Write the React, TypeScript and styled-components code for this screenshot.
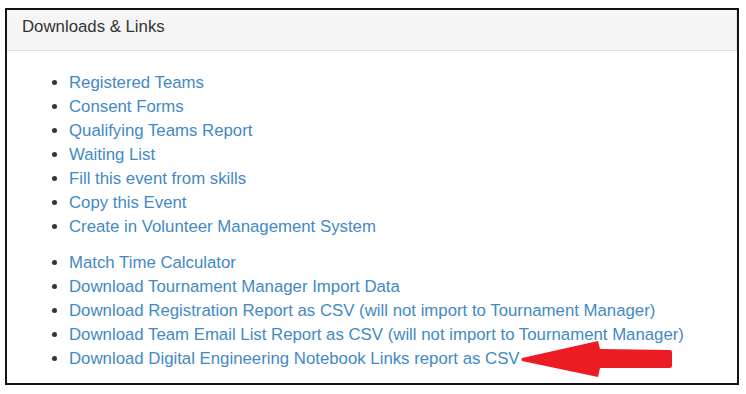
import React from "react";
import styled, { createGlobalStyle } from "styled-components";

const Global = createGlobalStyle`
  html, body { margin: 0; padding: 0; background: #ffffff; }
  body { font-family: "Liberation Sans", Arial, sans-serif; }
`;

const Frame = styled.div`
  position: relative;
  margin: 8px 0 0 5px;
  width: 734px;
  height: 377px;
  box-sizing: border-box;
  border: 2px solid #141414;
  background: #ffffff;
`;

const Heading = styled.div`
  box-sizing: border-box;
  height: 41px;
  padding: 5px 15px 0 15px;
  background: #f5f5f5;
  border-bottom: 1px solid #dddddd;
  border-right: 1px solid #e2e2e2;
  font-size: 16.8px;
  line-height: 24px;
  color: #333333;
`;

const Body = styled.div`
  padding: 20px 15px 0 15px;
`;

const LinkList = styled.ul`
  margin: 0 0 12px 0;
  padding-left: 47px;
  list-style: disc;
  color: #333333;
  font-size: 16.8px;
  line-height: 24px;
`;

const Item = styled.li``;

const Link = styled.a`
  color: #4289c6;
  text-decoration: none;
`;

const Arrow = styled.svg`
  position: absolute;
  left: 508px;
  top: 325px;
  width: 165px;
  height: 50px;
  overflow: visible;
`;

const groupA = [
  "Registered Teams",
  "Consent Forms",
  "Qualifying Teams Report",
  "Waiting List",
  "Fill this event from skills",
  "Copy this Event",
  "Create in Volunteer Management System",
];

const groupB = [
  "Match Time Calculator",
  "Download Tournament Manager Import Data",
  "Download Registration Report as CSV (will not import to Tournament Manager)",
  "Download Team Email List Report as CSV (will not import to Tournament Manager)",
  "Download Digital Engineering Notebook Links report as CSV",
];

export default function App() {
  return (
    <>
      <Global />
      <Frame>
        <Heading>Downloads &amp; Links</Heading>
        <Body>
          <LinkList>
            {groupA.map((t) => (
              <Item key={t}>
                <Link href="#">{t}</Link>
              </Item>
            ))}
          </LinkList>
          <LinkList>
            {groupB.map((t) => (
              <Item key={t}>
                <Link href="#">{t}</Link>
              </Item>
            ))}
          </LinkList>
        </Body>
        <Arrow viewBox="0 0 165 50">
          <path
            d="M7 23 L83 6 L85 14 L155 15 Q157 15 157 17 L157 31 Q157 33 155 33 L85 33 L83 42 L7 26 Q6 24.5 7 23 Z"
            fill="#ed1c24"
          />
        </Arrow>
      </Frame>
    </>
  );
}
